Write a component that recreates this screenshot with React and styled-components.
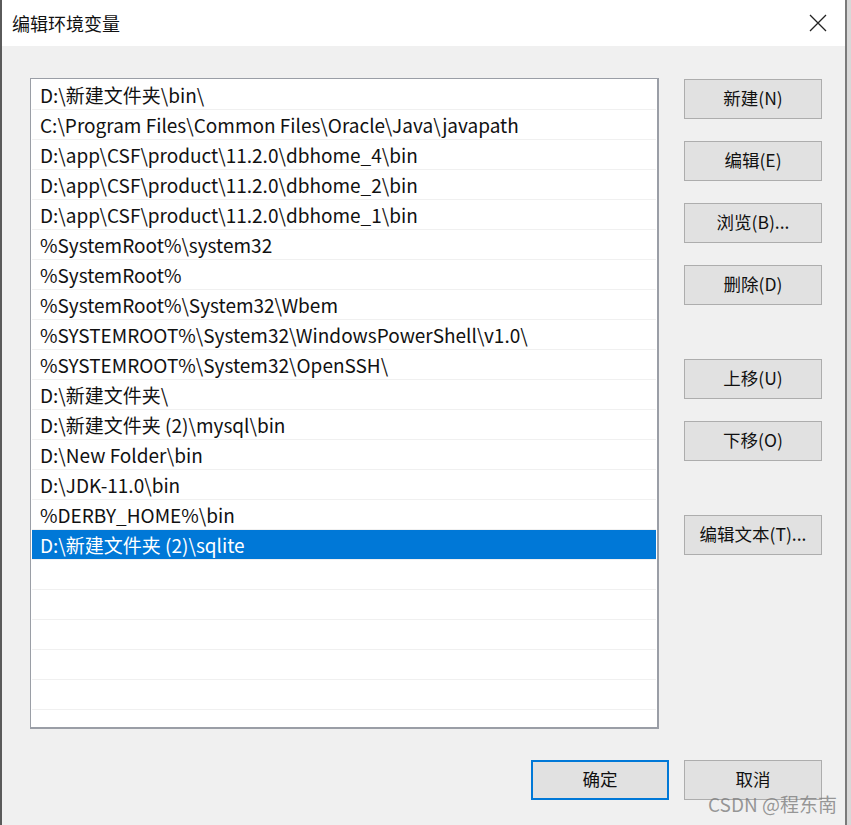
import styled, { createGlobalStyle } from "styled-components";

const Global = createGlobalStyle`
  html, body { margin: 0; padding: 0; }
  body {
    width: 851px;
    height: 825px;
    overflow: hidden;
    background: #8c8c8c;
    font-family: "Noto Sans CJK SC", "Noto Sans", sans-serif;
  }
`;

const Screen = styled.div`
  display: flex;
  width: 851px;
  height: 825px;
`;

const LeftEdge = styled.div`
  width: 2px;
  background: #5a5a5a;
`;

const RightEdge = styled.div`
  flex: 1;
  background: #d8d8d8;
  border-left: 2px solid #7a7a7a;
`;

const Dialog = styled.div`
  width: 843px;
  display: flex;
  flex-direction: column;
  background: #f0f0f0;
`;

const TitleBar = styled.div`
  height: 46px;
  background: #fff;
  display: flex;
  align-items: center;
  justify-content: space-between;
  padding: 0 0 0 10px;
  box-sizing: border-box;
`;

const Title = styled.span`
  font-size: 18px;
  color: #111;
`;

const CloseBtn = styled.div`
  width: 46px;
  height: 46px;
  display: flex;
  align-items: center;
  justify-content: center;
  margin-right: 4px;
`;

const Body = styled.div`
  flex: 1;
  display: flex;
  flex-direction: column;
  padding: 32px 23px 0 28px;
`;

const Main = styled.div`
  display: flex;
  gap: 25px;
`;

const ListBox = styled.div`
  width: 627px;
  height: 646px;
  background: #fff;
  border: 1px solid #9a9ea6;
  border-right-width: 2px;
  border-bottom-width: 2px;
  padding: 1px;
  box-sizing: content-box;
  overflow: hidden;
`;

const Row = styled.div`
  height: 29px;
  border-bottom: 1px solid #f0f0f0;
  display: flex;
  align-items: center;
  padding-left: 8px;
  font-size: 19px;
  white-space: nowrap;
  color: ${({ selected }) => (selected ? "#fff" : "#111")};
  background: ${({ selected }) => (selected ? "#0078d7" : "#fff")};
`;

const Side = styled.div`
  display: flex;
  flex-direction: column;
  padding-top: 1px;
`;

const Button = styled.div`
  width: 134px;
  height: 36px;
  background: #e1e1e1;
  border: 2px solid ${({ primary }) => (primary ? "#0078d7" : "#adadad")};
  border-width: ${({ primary }) => (primary ? "2px" : "1px")};
  padding: ${({ primary }) => (primary ? "0" : "1px")};
  display: flex;
  align-items: center;
  justify-content: center;
  font-size: 17.5px;
  line-height: 1;
  padding-bottom: ${({ primary }) => (primary ? "2px" : "3px")};
  box-sizing: content-box;
  height: 34px;
  color: #111;
  margin-top: ${({ gap }) => gap || 0}px;
`;

const Footer = styled.div`
  display: flex;
  justify-content: flex-end;
  gap: 15px;
  margin-top: 31px;
`;

const Watermark = styled.div`
  position: absolute;
  right: 14px;
  bottom: 8px;
  font-size: 19px;
  color: rgba(120, 120, 120, 0.75);
`;

const paths = [
  "D:\\新建文件夹\\bin\\",
  "C:\\Program Files\\Common Files\\Oracle\\Java\\javapath",
  "D:\\app\\CSF\\product\\11.2.0\\dbhome_4\\bin",
  "D:\\app\\CSF\\product\\11.2.0\\dbhome_2\\bin",
  "D:\\app\\CSF\\product\\11.2.0\\dbhome_1\\bin",
  "%SystemRoot%\\system32",
  "%SystemRoot%",
  "%SystemRoot%\\System32\\Wbem",
  "%SYSTEMROOT%\\System32\\WindowsPowerShell\\v1.0\\",
  "%SYSTEMROOT%\\System32\\OpenSSH\\",
  "D:\\新建文件夹\\",
  "D:\\新建文件夹 (2)\\mysql\\bin",
  "D:\\New Folder\\bin",
  "D:\\JDK-11.0\\bin",
  "%DERBY_HOME%\\bin",
  "D:\\新建文件夹 (2)\\sqlite",
  "", "", "", "", "", "",
];

const buttons = [
  { label: "新建(N)", gap: 0 },
  { label: "编辑(E)", gap: 22 },
  { label: "浏览(B)...", gap: 22 },
  { label: "删除(D)", gap: 22 },
  { label: "上移(U)", gap: 54 },
  { label: "下移(O)", gap: 22 },
  { label: "编辑文本(T)...", gap: 54 },
];

export default function App() {
  return (
    <>
      <Global />
      <Screen>
        <LeftEdge />
        <Dialog>
          <TitleBar>
            <Title>编辑环境变量</Title>
            <CloseBtn>
              <svg width="18" height="18" viewBox="0 0 18 18">
                <path d="M1 1L17 17M17 1L1 17" stroke="#222" strokeWidth="1.3" />
              </svg>
            </CloseBtn>
          </TitleBar>
          <Body>
            <Main>
              <ListBox>
                {paths.map((p, i) => (
                  <Row key={i} selected={i === 15}>
                    {p}
                  </Row>
                ))}
              </ListBox>
              <Side>
                {buttons.map((b) => (
                  <Button key={b.label} gap={b.gap}>
                    {b.label}
                  </Button>
                ))}
              </Side>
            </Main>
            <Footer>
              <Button primary>确定</Button>
              <Button>取消</Button>
            </Footer>
          </Body>
        </Dialog>
        <RightEdge />
      </Screen>
      <Watermark>CSDN @程东南</Watermark>
    </>
  );
}
